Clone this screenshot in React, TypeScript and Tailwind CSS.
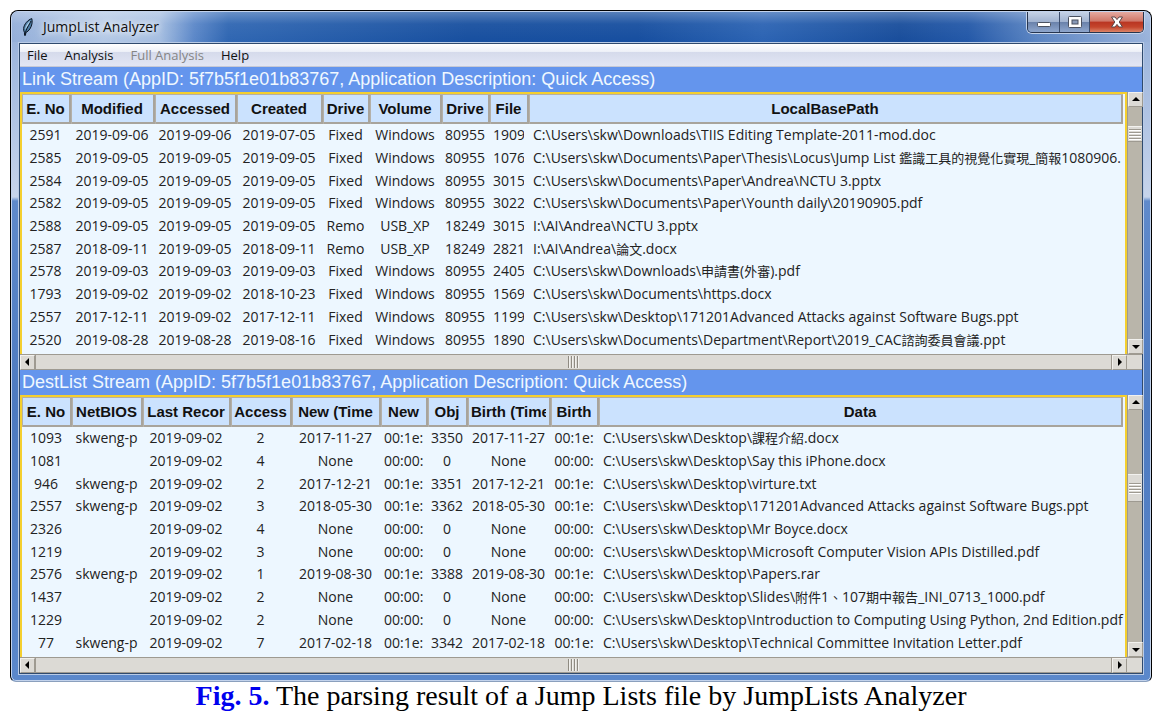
import { clsx } from "clsx";

type Column = { label: string; width: string; align?: "left" };

type Stream = {
  title: string;
  columns: Column[];
  rows: string[][];
  thumbTop: string;
  thumbHeight: string;
};

const linkStream: Stream = {
  title: "Link Stream (AppID: 5f7b5f1e01b83767, Application Description: Quick Access)",
  thumbTop: "mt-[19px]",
  thumbHeight: "h-4",
  columns: [
    { label: "E. No", width: "w-[49px]" },
    { label: "Modified", width: "w-[84px]" },
    { label: "Accessed", width: "w-[82px]" },
    { label: "Created", width: "w-[86px]" },
    { label: "Drive", width: "w-[47px]" },
    { label: "Volume", width: "w-[72px]" },
    { label: "Drive", width: "w-[48px]" },
    { label: "File", width: "w-[39px]" },
    { label: "LocalBasePath", width: "w-auto", align: "left" },
  ],
  rows: [
    ["2591", "2019-09-06", "2019-09-06", "2019-07-05", "Fixed", "Windows", "80955", "1909", "C:\\Users\\skw\\Downloads\\TIIS Editing Template-2011-mod.doc"],
    ["2585", "2019-09-05", "2019-09-05", "2019-09-05", "Fixed", "Windows", "80955", "1076", "C:\\Users\\skw\\Documents\\Paper\\Thesis\\Locus\\Jump List 鑑識工具的視覺化實現_簡報1080906."],
    ["2584", "2019-09-05", "2019-09-05", "2019-09-05", "Fixed", "Windows", "80955", "3015", "C:\\Users\\skw\\Documents\\Paper\\Andrea\\NCTU 3.pptx"],
    ["2582", "2019-09-05", "2019-09-05", "2019-09-05", "Fixed", "Windows", "80955", "3022", "C:\\Users\\skw\\Documents\\Paper\\Younth daily\\20190905.pdf"],
    ["2588", "2019-09-05", "2019-09-05", "2019-09-05", "Remo", "USB_XP", "18249", "3015", "I:\\AI\\Andrea\\NCTU 3.pptx"],
    ["2587", "2018-09-11", "2019-09-05", "2018-09-11", "Remo", "USB_XP", "18249", "2821", "I:\\AI\\Andrea\\論文.docx"],
    ["2578", "2019-09-03", "2019-09-03", "2019-09-03", "Fixed", "Windows", "80955", "2405", "C:\\Users\\skw\\Downloads\\申請書(外審).pdf"],
    ["1793", "2019-09-02", "2019-09-02", "2018-10-23", "Fixed", "Windows", "80955", "1569", "C:\\Users\\skw\\Documents\\https.docx"],
    ["2557", "2017-12-11", "2019-09-02", "2017-12-11", "Fixed", "Windows", "80955", "1199", "C:\\Users\\skw\\Desktop\\171201Advanced Attacks against Software Bugs.ppt"],
    ["2520", "2019-08-28", "2019-08-28", "2019-08-16", "Fixed", "Windows", "80955", "1890", "C:\\Users\\skw\\Documents\\Department\\Report\\2019_CAC諮詢委員會議.ppt"],
  ],
};

const destListStream: Stream = {
  title: "DestList Stream (AppID: 5f7b5f1e01b83767, Application Description: Quick Access)",
  thumbTop: "mt-16",
  thumbHeight: "h-7",
  columns: [
    { label: "E. No", width: "w-[50px]" },
    { label: "NetBIOS", width: "w-[71px]" },
    { label: "Last Recor", width: "w-[88px]" },
    { label: "Access", width: "w-[61px]" },
    { label: "New (Time", width: "w-[89px]" },
    { label: "New", width: "w-[47px]" },
    { label: "Obj", width: "w-[40px]" },
    { label: "Birth (Time", width: "w-[83px]" },
    { label: "Birth", width: "w-[48px]" },
    { label: "Data", width: "w-auto", align: "left" },
  ],
  rows: [
    ["1093", "skweng-p", "2019-09-02", "2", "2017-11-27", "00:1e:", "3350", "2017-11-27", "00:1e:", "C:\\Users\\skw\\Desktop\\課程介紹.docx"],
    ["1081", "", "2019-09-02", "4", "None", "00:00:", "0", "None", "00:00:", "C:\\Users\\skw\\Desktop\\Say this iPhone.docx"],
    ["946", "skweng-p", "2019-09-02", "2", "2017-12-21", "00:1e:", "3351", "2017-12-21", "00:1e:", "C:\\Users\\skw\\Desktop\\virture.txt"],
    ["2557", "skweng-p", "2019-09-02", "3", "2018-05-30", "00:1e:", "3362", "2018-05-30", "00:1e:", "C:\\Users\\skw\\Desktop\\171201Advanced Attacks against Software Bugs.ppt"],
    ["2326", "", "2019-09-02", "4", "None", "00:00:", "0", "None", "00:00:", "C:\\Users\\skw\\Desktop\\Mr Boyce.docx"],
    ["1219", "", "2019-09-02", "3", "None", "00:00:", "0", "None", "00:00:", "C:\\Users\\skw\\Desktop\\Microsoft Computer Vision APIs Distilled.pdf"],
    ["2576", "skweng-p", "2019-09-02", "1", "2019-08-30", "00:1e:", "3388", "2019-08-30", "00:1e:", "C:\\Users\\skw\\Desktop\\Papers.rar"],
    ["1437", "", "2019-09-02", "2", "None", "00:00:", "0", "None", "00:00:", "C:\\Users\\skw\\Desktop\\Slides\\附件1、107期中報告_INI_0713_1000.pdf"],
    ["1229", "", "2019-09-02", "2", "None", "00:00:", "0", "None", "00:00:", "C:\\Users\\skw\\Desktop\\Introduction to Computing Using Python, 2nd Edition.pdf"],
    ["77", "skweng-p", "2019-09-02", "7", "2017-02-18", "00:1e:", "3342", "2017-02-18", "00:1e:", "C:\\Users\\skw\\Desktop\\Technical Committee Invitation Letter.pdf"],
  ],
};

const arrows = {
  up: "M1 6 L5 2 L9 6 Z",
  down: "M1 3 L5 7 L9 3 Z",
  left: "M6 0 L2 4 L6 8 Z",
  right: "M3 0 L7 4 L3 8 Z",
};

function ScrollButton({ dir }: { dir: keyof typeof arrows }) {
  return (
    <button
      aria-label={`Scroll ${dir}`}
      className="w-[15px] h-[15px] shrink-0 flex items-center justify-center bg-[#dcdad5] border border-[#9e9a91] border-t-[#f2f1ee] border-l-[#f2f1ee]"
    >
      <svg viewBox="0 0 10 9" className="w-[10px] h-[9px]">
        <path d={arrows[dir]} fill="#000" />
      </svg>
    </button>
  );
}

function VerticalScrollbar({ thumbTop, thumbHeight }: { thumbTop: string; thumbHeight: string }) {
  return (
    <div className="w-[15px] shrink-0 flex flex-col bg-[#b9b5aa] border-l border-[#9e9a91]">
      <ScrollButton dir="up" />
      <div className="flex-1">
        <div
          className={clsx(
            "flex flex-col items-center justify-center gap-px bg-[#dcdad5] border-y border-t-[#f2f1ee] border-b-[#9e9a91]",
            thumbTop,
            thumbHeight
          )}
        >
          {[0, 1, 2, 3].map((i) => (
            <div key={i} className="w-3 h-[2px] border-t border-[#9e9a91] bg-white" />
          ))}
        </div>
      </div>
      <ScrollButton dir="down" />
    </div>
  );
}

function HorizontalScrollbar() {
  return (
    <div className="h-4 flex bg-[#dcdad5] border-y border-[#9e9a91]">
      <ScrollButton dir="left" />
      <div className="flex-1 flex items-center justify-center gap-px border-x border-[#9e9a91]">
        {[0, 1, 2, 3].map((i) => (
          <div key={i} className="w-[2px] h-3 border-l border-[#8f8b82] bg-[#f2f1ee]" />
        ))}
      </div>
      <ScrollButton dir="right" />
      <div className="w-[15px]" />
    </div>
  );
}

// Chinese glyphs run large next to the Latin text, so they get one size less
function CellText({ value }: { value: string }) {
  return (
    <>
      {value.split(/([\u3000-\u9fff]+)/).map((part, i) =>
        i % 2 === 1 ? (
          <span key={i} className="text-[13px]">
            {part}
          </span>
        ) : (
          part
        )
      )}
    </>
  );
}

function StreamPanel({ stream }: { stream: Stream }) {
  return (
    <section>
      <h2 className="h-[25px] px-[2px] bg-[#6495ed] text-[#f0f8ff] text-[18px] leading-[25px] whitespace-nowrap overflow-hidden font-['Liberation_Sans',sans-serif]">
        {stream.title}
      </h2>
      <div className="h-[262px] flex">
        <div className="flex-1 min-w-0 pr-[2px] border-2 border-b-0 border-[#f4cf2f] bg-[#edf7ff]">
          <table className="w-full h-[257px] table-fixed border-collapse">
            <colgroup>
              {stream.columns.map((c, i) => (
                <col key={i} className={c.width} />
              ))}
            </colgroup>
            <thead>
              <tr className="h-[30px]">
                {stream.columns.map((c, i) => (
                  <th
                    key={i}
                    className="p-0 bg-[#cbe2fe] shadow-[inset_1px_1px_0_#b4b0a8,inset_-2px_-2px_0_#a8a49c] font-bold text-[15px] leading-5 text-[#111] font-['Liberation_Sans',sans-serif]"
                  >
                    <div className="ml-[3px] mr-[5px] overflow-hidden whitespace-nowrap">{c.label}</div>
                  </th>
                ))}
              </tr>
            </thead>
            <tbody>
              {stream.rows.map((row) => (
                <tr key={row[0]}>
                  {row.map((value, i) => (
                    <td key={i} className="p-0 text-sm leading-[22px] text-[#222]">
                      <div
                        className={clsx(
                          "h-[22px] whitespace-nowrap",
                          stream.columns[i].align === "left"
                            ? "ml-1 text-left"
                            : "ml-[3px] mr-[5px] text-center overflow-hidden"
                        )}
                      >
                        <CellText value={value} />
                      </div>
                    </td>
                  ))}
                </tr>
              ))}
            </tbody>
          </table>
        </div>
        <VerticalScrollbar thumbTop={stream.thumbTop} thumbHeight={stream.thumbHeight} />
      </div>
      <HorizontalScrollbar />
    </section>
  );
}

function FeatherIcon() {
  return (
    <svg viewBox="0 0 12 18" className="w-3 h-[18px]">
      <path
        d="M9.8 0.6 C6 1.8 2 6 1.6 10.5 C1.5 12.2 1.8 13.4 2.4 14.2 L2.6 17.4 L3.4 17.4 L3.9 14.6 C7 13 9.4 9.5 10 5.5 C10.3 3.5 10.1 1.8 9.8 0.6 Z"
        fill="#4f7fa6"
        stroke="#0b1522"
        strokeWidth="1"
      />
      <path d="M8.6 2.6 C5.6 4.8 3.4 8 2.9 12 C4.5 9.8 7.4 6.5 8.6 2.6 Z" fill="#a9cde6" />
      <path d="M9 3 C7.4 7 4.2 10 3 16.6" fill="none" stroke="#0b1522" strokeWidth="1" />
    </svg>
  );
}

function TitleBar() {
  return (
    <header className="h-[30px] flex items-start bg-[linear-gradient(to_bottom,rgba(255,255,255,0.28),rgba(255,255,255,0.05)_40%,rgba(255,255,255,0)),linear-gradient(to_right,#94afd9_0,#b4c9e6_8%,#a5bee1_13%,#5b87c8_16%,#2f66b2_19%,#174f9f_40%,#164e9f_55%,#2b63b3_66%,#184d9b_78%,#2358a8_84%,#5a84c2_90%,#9ab3db_100%)]">
      <div className="flex-1 h-[30px] flex items-center pl-[10px] gap-[9px]">
        <FeatherIcon />
        <h1 className="text-sm leading-5 text-[#101010] [text-shadow:0_0_6px_#fff,0_0_10px_#fff]">JumpList Analyzer</h1>
      </div>
      <div className="h-[21px] mr-[6px] flex rounded-b-[5px] overflow-hidden border border-t-0 border-[#26354f] shadow-[0_0_0_1px_#c4d3ea]">
        <button
          aria-label="Minimize"
          className="w-8 flex items-center justify-center border-r border-[#3c4d6c] bg-[linear-gradient(#c5d2e6_0,#a1b3d0_48%,#6981aa_50%,#8ea6cd_100%)]"
        >
          <svg viewBox="0 0 14 12" className="w-[14px] h-3">
            <rect x="0.5" y="6.5" width="13" height="4" rx="1" fill="#fff" stroke="#4a5160" />
          </svg>
        </button>
        <button
          aria-label="Maximize"
          className="w-[30px] flex items-center justify-center border-r border-[#3c4d6c] bg-[linear-gradient(#c5d2e6_0,#a1b3d0_48%,#6981aa_50%,#8ea6cd_100%)]"
        >
          <svg viewBox="0 0 14 12" className="w-[14px] h-3">
            <rect x="0.5" y="0.5" width="13" height="11" rx="1" fill="#fff" stroke="#4a5160" />
            <rect x="4" y="4" width="6" height="4" fill="#8799b8" stroke="#4a5160" />
          </svg>
        </button>
        <button
          aria-label="Close"
          className="w-[53px] flex items-center justify-center bg-[linear-gradient(#e5aaa1_0,#cf7768_46%,#b93522_50%,#c4452c_75%,#dc8468_100%)]"
        >
          <svg viewBox="0 0 14 12" className="w-[14px] h-3">
            <path
              d="M1.5 1 H5 L7 3.6 L9 1 H12.5 L9.2 6 L12.5 11 H9 L7 8.4 L5 11 H1.5 L4.8 6 Z"
              fill="#fff"
              stroke="#5c4648"
            />
          </svg>
        </button>
      </div>
    </header>
  );
}

const menuItems = [
  { label: "File" },
  { label: "Analysis" },
  { label: "Full Analysis", disabled: true },
  { label: "Help" },
];

export default function App() {
  return (
    <div className="min-h-screen bg-white pt-[10px] pl-[10px] pr-[19px] font-['Open_Sans','Noto_Sans_CJK_TC',sans-serif]">
      <main className="rounded-t-lg rounded-b-md overflow-hidden border border-black border-b-[#8ba0bd] bg-[linear-gradient(to_bottom,#93aed9_0,#c6d4eb_186px,#5f8acb_190px,#4d7ac0_400px,#5b88cb_100%)]">
        <div className="rounded-t-[7px] rounded-b-[5px] overflow-hidden border border-[#c3d3ec]">
          <TitleBar />
          <div className="mx-[6px] mb-[5px] border border-[#b9cbe6]">
            <div className="border border-[#2f4a6e]">
              <nav className="h-[23px] flex items-center gap-[17px] px-[7px] border-b border-[#c6c9d6] bg-[linear-gradient(#ffffff_0,#eef1f8_34%,#d5daeb_36%,#e2e6f4_100%)]">
                {menuItems.map((item) => (
                  <button
                    key={item.label}
                    disabled={item.disabled}
                    className="text-[13px] leading-5 text-[#111] disabled:text-[#858585]"
                  >
                    {item.label}
                  </button>
                ))}
              </nav>
              <StreamPanel stream={linkStream} />
              <StreamPanel stream={destListStream} />
            </div>
          </div>
        </div>
      </main>
      <p className="text-center text-[28px] leading-7 text-black font-['Liberation_Serif',serif]">
        <b className="text-[#0000ee]">Fig. 5.</b> The parsing result of a Jump Lists file by JumpLists Analyzer
      </p>
    </div>
  );
}
